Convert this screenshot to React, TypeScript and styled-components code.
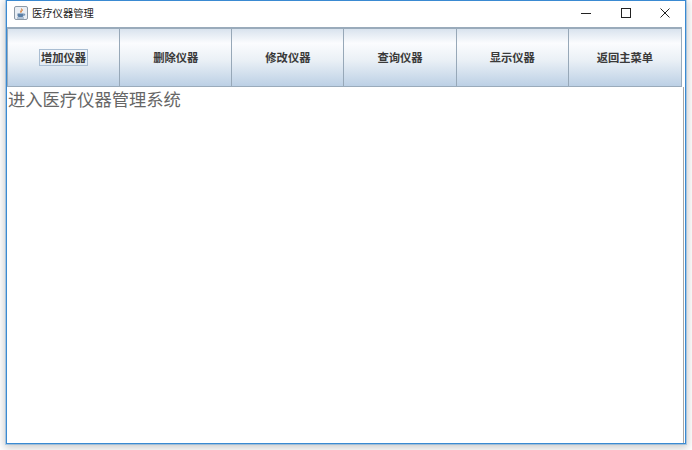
import React from 'react'
import styled, { createGlobalStyle } from 'styled-components'

const GlobalStyle = createGlobalStyle`
  html, body {
    margin: 0;
    padding: 0;
    background: #fff;
  }
`

const Desktop = styled.div`
  width: 692px;
  height: 450px;
  padding-left: 6px;
  box-sizing: border-box;
  overflow: hidden;
  font-family: "Noto Sans CJK SC", "Liberation Sans", sans-serif;
`

const Win = styled.div`
  width: 680px;
  height: 444px;
  box-sizing: border-box;
  border: 1px solid #3a8ad2;
  background: #fff;
  display: flex;
  flex-direction: column;
  box-shadow: 0 0 0 1px rgba(70, 145, 215, 0.35), 0 2px 8px 2px rgba(0, 0, 0, 0.2);
`

const TitleBar = styled.div`
  height: 26px;
  flex: none;
  box-sizing: border-box;
  padding: 0 0 2px 7px;
  display: flex;
  align-items: center;
`

const TitleText = styled.span`
  margin-left: 4px;
  font-size: 10.3px;
  line-height: 14px;
  color: #1c1c1c;
`

const Controls = styled.div`
  margin-left: auto;
  display: flex;
`

const Control = styled.div`
  width: 39.5px;
  height: 24px;
  display: flex;
  align-items: center;
  justify-content: center;
`

const Toolbar = styled.div`
  width: 675px;
  height: 60px;
  flex: none;
  box-sizing: border-box;
  display: grid;
  grid-template-columns: repeat(6, 1fr);
  border: 1px solid #9aabbb;
  border-top-width: 2px;
  background: linear-gradient(to bottom, #d9e3ee 0%, #fbfcfe 25%, #eaf0f6 55%, #bcd0e5 100%);
`

const ToolButton = styled.div<{ $last?: boolean }>`
  display: flex;
  align-items: center;
  justify-content: center;
  border-right: ${p => (p.$last ? 'none' : '1px solid #97a8b8')};
`

const ToolLabel = styled.span<{ $focused?: boolean }>`
  padding: 0 0.5px;
  font-size: 11.3px;
  font-weight: 700;
  line-height: 15px;
  color: #3a3a3a;
  border: 1px solid ${p => (p.$focused ? '#a9bdd2' : 'transparent')};
`

const Content = styled.div`
  flex: 1;
  margin-right: 1px;
  border-right: 1px solid #a6a6a6;
  padding: 1px 0 0 1px;
  font-size: 17.3px;
  line-height: 22px;
  font-weight: 400;
  color: #666;
`

const JavaIcon = () => (
  <svg width="14" height="14" viewBox="0 0 14 14">
    <rect x="0.5" y="0.5" width="13" height="13" rx="1.5" fill="#e9eef4" stroke="#8c9aa8" />
    <path d="M7.5 2.5c1 1.5-1.6 2.2-.6 4 .1-1.1 2-1.6 1.4-3" fill="none" stroke="#d9772a" strokeWidth="1" />
    <path d="M3.5 7.5h6v2.2a1.6 1.6 0 0 1-1.6 1.3H5.1a1.6 1.6 0 0 1-1.6-1.3z" fill="#5a7fa6" />
    <path d="M9.5 8h1.2v1.2H9.5" fill="none" stroke="#5a7fa6" strokeWidth="0.8" />
    <path d="M3 12h7" stroke="#5a7fa6" strokeWidth="0.8" />
  </svg>
)

const labels = ['增加仪器', '删除仪器', '修改仪器', '查询仪器', '显示仪器', '返回主菜单']

const App: React.FC = () => {
  return (
    <Desktop>
      <GlobalStyle />
      <Win>
        <TitleBar>
          <JavaIcon />
          <TitleText>医疗仪器管理</TitleText>
          <Controls>
            <Control>
              <svg width="10" height="10" viewBox="0 0 10 10">
                <path d="M0 5.5h10" stroke="#222" strokeWidth="1" />
              </svg>
            </Control>
            <Control>
              <svg width="10" height="10" viewBox="0 0 10 10">
                <rect x="0.5" y="0.5" width="9" height="9" fill="none" stroke="#222" strokeWidth="1" />
              </svg>
            </Control>
            <Control>
              <svg width="10" height="10" viewBox="0 0 10 10">
                <path d="M0.5 0.5l9 9M9.5 0.5l-9 9" stroke="#222" strokeWidth="1" />
              </svg>
            </Control>
          </Controls>
        </TitleBar>
        <Toolbar>
          {labels.map((label, index) => (
            <ToolButton key={label} $last={index === labels.length - 1}>
              <ToolLabel $focused={index === 0}>{label}</ToolLabel>
            </ToolButton>
          ))}
        </Toolbar>
        <Content>进入医疗仪器管理系统</Content>
      </Win>
    </Desktop>
  )
}

export default App
